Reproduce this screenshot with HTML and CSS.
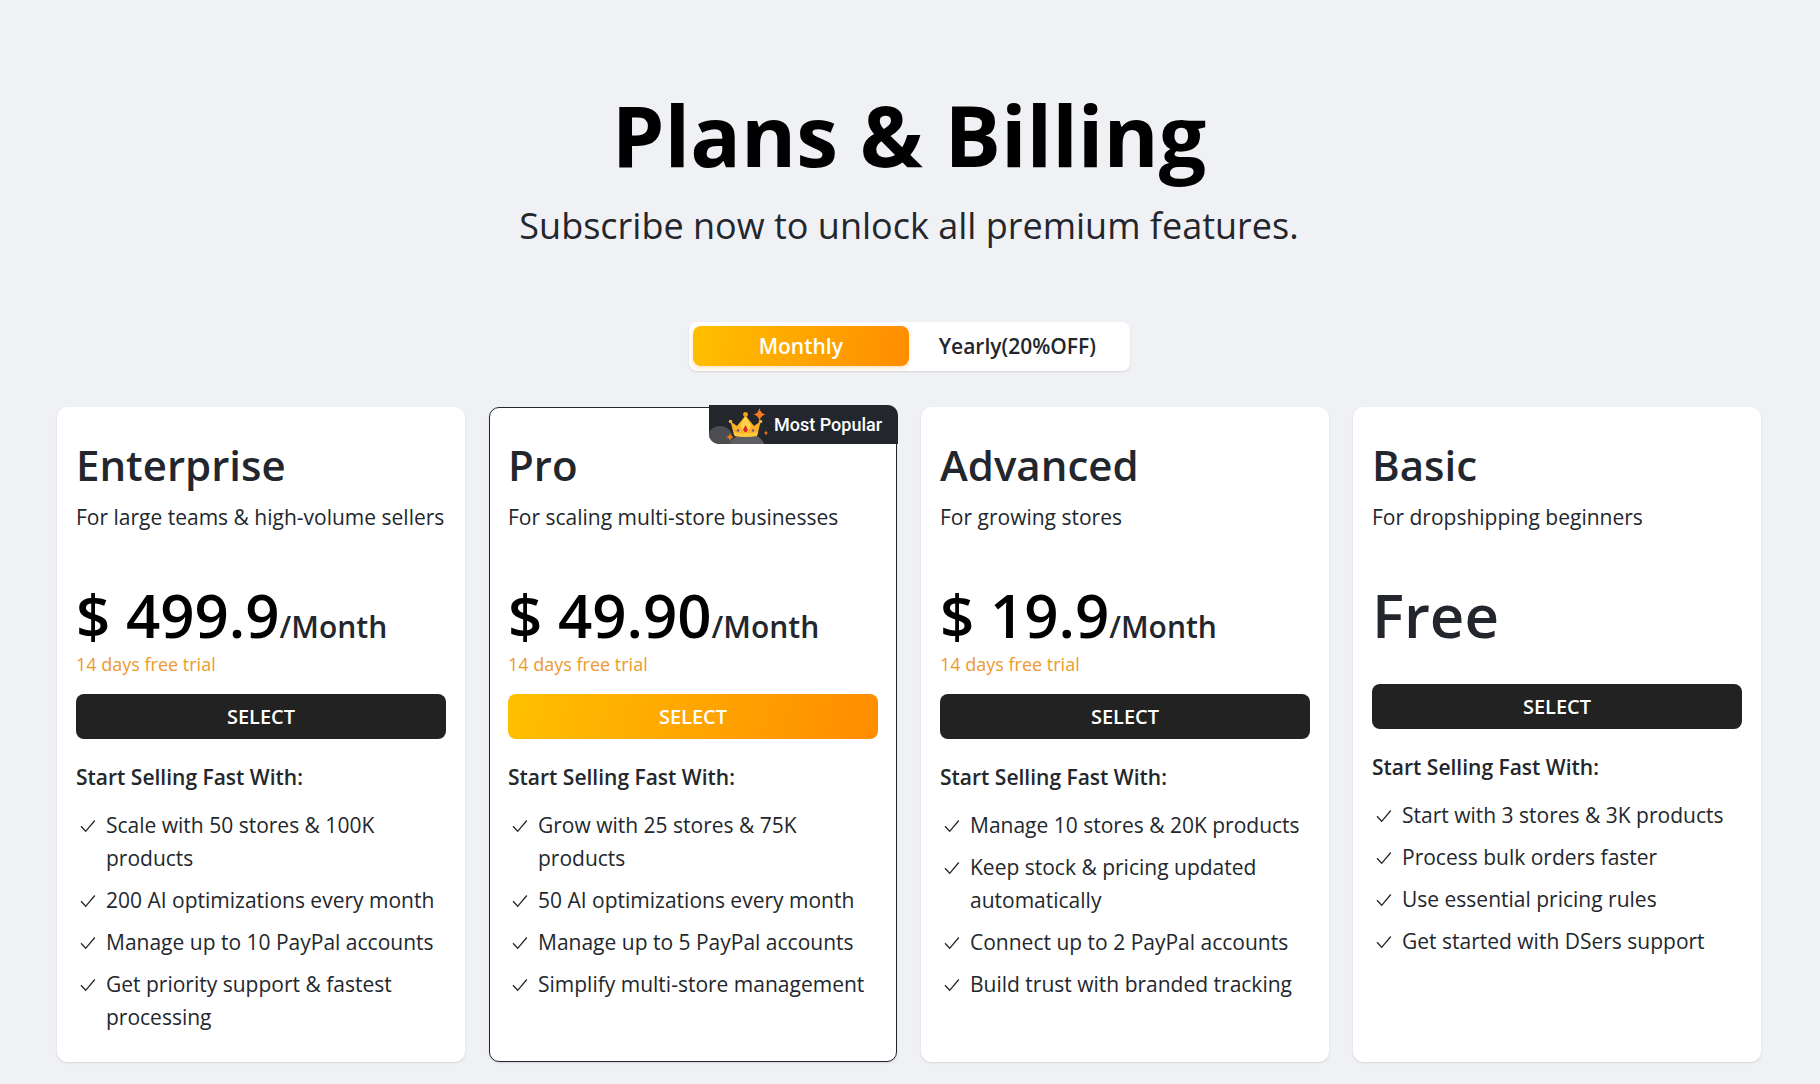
FILE: index.html
```html
<!DOCTYPE html>
<html lang="en">
<head>
    <meta charset="UTF-8">
    <meta name="viewport" content="width=device-width, initial-scale=1.0">
    <title>Plans &amp; Billing</title>
    <link rel="stylesheet" href="styles.css">
</head>
<body>
    <!-- Check icon shared by all feature lists -->
    <svg class="sprite" aria-hidden="true">
        <symbol id="check" viewBox="0 0 24 24">
            <path d="M5 12.800 L9.700 17.800 L18.800 7" fill="none" stroke="currentColor" stroke-width="1.3"/>
        </symbol>
    </svg>

    <header class="header">
        <h1>Plans &amp; Billing</h1>
        <p>Subscribe now to unlock all premium features.</p>
    </header>

    <div class="toggle">
        <button type="button" class="toggle-btn active">Monthly</button>
        <button type="button" class="toggle-btn">Yearly(20%OFF)</button>
    </div>

    <main class="plans">
        <section class="card">
            <h2>Enterprise</h2>
            <p class="desc">For large teams &amp; high-volume sellers</p>
            <div class="price">$ 499.9<span>/Month</span></div>
            <p class="trial">14 days free trial</p>
            <button type="button" class="select-btn">SELECT</button>
            <h3>Start Selling Fast With:</h3>
            <ul class="features">
                <li><svg class="check"><use href="#check"/></svg><span>Scale with 50 stores &amp; 100K products</span></li>
                <li><svg class="check"><use href="#check"/></svg><span>200 AI optimizations every month</span></li>
                <li><svg class="check"><use href="#check"/></svg><span>Manage up to 10 PayPal accounts</span></li>
                <li><svg class="check"><use href="#check"/></svg><span>Get priority support &amp; fastest processing</span></li>
            </ul>
        </section>

        <section class="card popular">
            <div class="badge">
                <svg class="crown" viewBox="0 0 60 39" aria-hidden="true">
                    <circle cx="11" cy="34" r="13" fill="#4b4d51"/>
                    <circle cx="38" cy="47" r="19" fill="#5d5e61"/>
                    <path d="M21.500 16.500 L28 21 L36.500 10.500 L45 21 L51.500 16.500 L48.500 30 Q36.500 33 25 30 Z" fill="#fdb022"/>
                    <path d="M36.500 10.500 L42 21 L36.500 30 L31 21 Z" fill="#ffd34d"/>
                    <path d="M25 27 Q36.500 30 48.500 27 L48 31 Q36.500 33 25.500 31 Z" fill="#ffc83d"/>
                    <circle cx="36.500" cy="9.500" r="2.400" fill="#f9a51b"/>
                    <circle cx="21.500" cy="16.500" r="1.800" fill="#fdb022"/>
                    <circle cx="51.500" cy="16.500" r="1.800" fill="#fdb022"/>
                    <path d="M36.500 20 L39 25 L36.500 28 L34 25 Z" fill="#d9262c"/>
                    <circle cx="29" cy="25.500" r="1.300" fill="#6a5a9e"/>
                    <circle cx="44" cy="25.500" r="1.300" fill="#6a5a9e"/>
                    <path d="M50.500 3 Q51.500 8.500 56.500 9.500 Q51.500 10.500 50.500 16 Q49.500 10.500 44.500 9.500 Q49.500 8.500 50.500 3 Z" fill="#f47b20"/>
                    <path d="M21 28 Q21.500 31.500 25 32 Q21.500 32.500 21 36 Q20.500 32.500 17 32 Q20.500 31.500 21 28 Z" fill="#f47b20"/>
                    <path d="M57 25.500 L57.700 27.300 L59 28 L57.700 28.700 L57 30.500 L56.300 28.700 L55 28 L56.300 27.300 Z" fill="#f47b20"/>
                </svg>
                <span>Most Popular</span>
            </div>
            <h2>Pro</h2>
            <p class="desc">For scaling multi-store businesses</p>
            <div class="price">$ 49.90<span>/Month</span></div>
            <p class="trial">14 days free trial</p>
            <button type="button" class="select-btn">SELECT</button>
            <h3>Start Selling Fast With:</h3>
            <ul class="features">
                <li><svg class="check"><use href="#check"/></svg><span>Grow with 25 stores &amp; 75K products</span></li>
                <li><svg class="check"><use href="#check"/></svg><span>50 AI optimizations every month</span></li>
                <li><svg class="check"><use href="#check"/></svg><span>Manage up to 5 PayPal accounts</span></li>
                <li><svg class="check"><use href="#check"/></svg><span>Simplify multi-store management</span></li>
            </ul>
        </section>

        <section class="card">
            <h2>Advanced</h2>
            <p class="desc">For growing stores</p>
            <div class="price">$ 19.9<span>/Month</span></div>
            <p class="trial">14 days free trial</p>
            <button type="button" class="select-btn">SELECT</button>
            <h3>Start Selling Fast With:</h3>
            <ul class="features">
                <li><svg class="check"><use href="#check"/></svg><span>Manage 10 stores &amp; 20K products</span></li>
                <li><svg class="check"><use href="#check"/></svg><span>Keep stock &amp; pricing updated automatically</span></li>
                <li><svg class="check"><use href="#check"/></svg><span>Connect up to 2 PayPal accounts</span></li>
                <li><svg class="check"><use href="#check"/></svg><span>Build trust with branded tracking</span></li>
            </ul>
        </section>

        <section class="card">
            <h2>Basic</h2>
            <p class="desc">For dropshipping beginners</p>
            <div class="price free">Free</div>
            <button type="button" class="select-btn">SELECT</button>
            <h3>Start Selling Fast With:</h3>
            <ul class="features">
                <li><svg class="check"><use href="#check"/></svg><span>Start with 3 stores &amp; 3K products</span></li>
                <li><svg class="check"><use href="#check"/></svg><span>Process bulk orders faster</span></li>
                <li><svg class="check"><use href="#check"/></svg><span>Use essential pricing rules</span></li>
                <li><svg class="check"><use href="#check"/></svg><span>Get started with DSers support</span></li>
            </ul>
        </section>
    </main>
</body>
</html>
```

FILE: styles.css
```css
* {
    box-sizing: border-box;
}
body {
    margin: 0;
    padding: 85px 59px 22px 57px;
    background-color: #f0f1f5;
    color: #23272d;
    font-family: 'Open Sans', sans-serif;
}
h1, h2, h3, p, ul {
    margin: 0;
    padding: 0;
}
button {
    border: none;
    font-family: inherit;
    cursor: pointer;
}
.sprite {
    position: absolute;
    width: 0;
    height: 0;
}

/* Page heading */
.header {
    text-align: center;
}
.header h1 {
    font-size: 84px;
    line-height: 100px;
    font-weight: 700;
    color: #000;
}
.header p {
    margin-top: 14px;
    font-size: 36px;
    line-height: 54px;
}

/* Monthly / yearly switch */
.toggle {
    display: flex;
    width: 441px;
    margin: 69px auto 36px;
    padding: 4px 4px 5px;
    border-radius: 8px;
    background-color: #fff;
    box-shadow: 0 1px 2px rgba(0, 0, 0, 0.12);
}
.toggle-btn {
    flex: 1;
    height: 40px;
    padding: 0;
    border-radius: 8px;
    background: none;
    color: #23272d;
    font-size: 21px;
    font-weight: 600;
}
.toggle-btn.active {
    background: linear-gradient(105deg, #ffc000, #ff8c00);
    box-shadow: 0 2px 4px rgba(255, 140, 0, 0.25);
    color: #fff;
}

/* Plan cards */
.plans {
    display: grid;
    grid-template-columns: repeat(4, 1fr);
    gap: 24px;
}
.card {
    position: relative;
    padding: 32px 18px 27px;
    border: 1px solid #fff;
    border-radius: 10px;
    background-color: #fff;
    box-shadow: 0 1px 2px rgba(0, 0, 0, 0.12);
}
.card h2 {
    font-size: 42px;
    line-height: 50px;
    font-weight: 600;
}
.desc {
    margin-top: 11px;
    font-size: 21px;
    line-height: 33px;
}
.price {
    margin-top: 45px;
    font-size: 60px;
    line-height: 72px;
    font-weight: 600;
    color: #000;
}
.price span {
    font-size: 30px;
    line-height: 1;
    color: #23272d;
}
.price.free {
    margin-bottom: 33px;
    color: #23272d;
}
.trial {
    margin-bottom: 16px;
    font-size: 18px;
    line-height: 27px;
    color: #ec9a2c;
}
.select-btn {
    display: block;
    width: 100%;
    height: 45px;
    border-radius: 8px;
    background-color: #222;
    color: #fff;
    font-size: 20px;
    font-weight: 600;
}
.card h3 {
    margin-top: 22px;
    font-size: 21px;
    line-height: 33px;
    font-weight: 600;
}
.features {
    display: grid;
    gap: 9px;
    margin-top: 15px;
    list-style: none;
    font-size: 21px;
    line-height: 33px;
}
.features li {
    display: flex;
    gap: 6px;
}
.check {
    flex: none;
    width: 24px;
    height: 33px;
}

/* Highlighted plan */
.card.popular {
    border-color: #23272d;
}
.popular .select-btn {
    background: linear-gradient(105deg, #ffc000, #ff8c00);
}
.badge {
    position: absolute;
    top: -3px;
    right: -2px;
    display: flex;
    align-items: center;
    width: 189px;
    height: 39px;
    overflow: hidden;
    border-radius: 0 10px 0 10px;
    background-color: #23272d;
    color: #fff;
    font-family: Roboto, sans-serif;
    font-size: 18px;
    font-weight: 500;
}
.crown {
    width: 60px;
    height: 39px;
    margin-right: 5px;
}
```
